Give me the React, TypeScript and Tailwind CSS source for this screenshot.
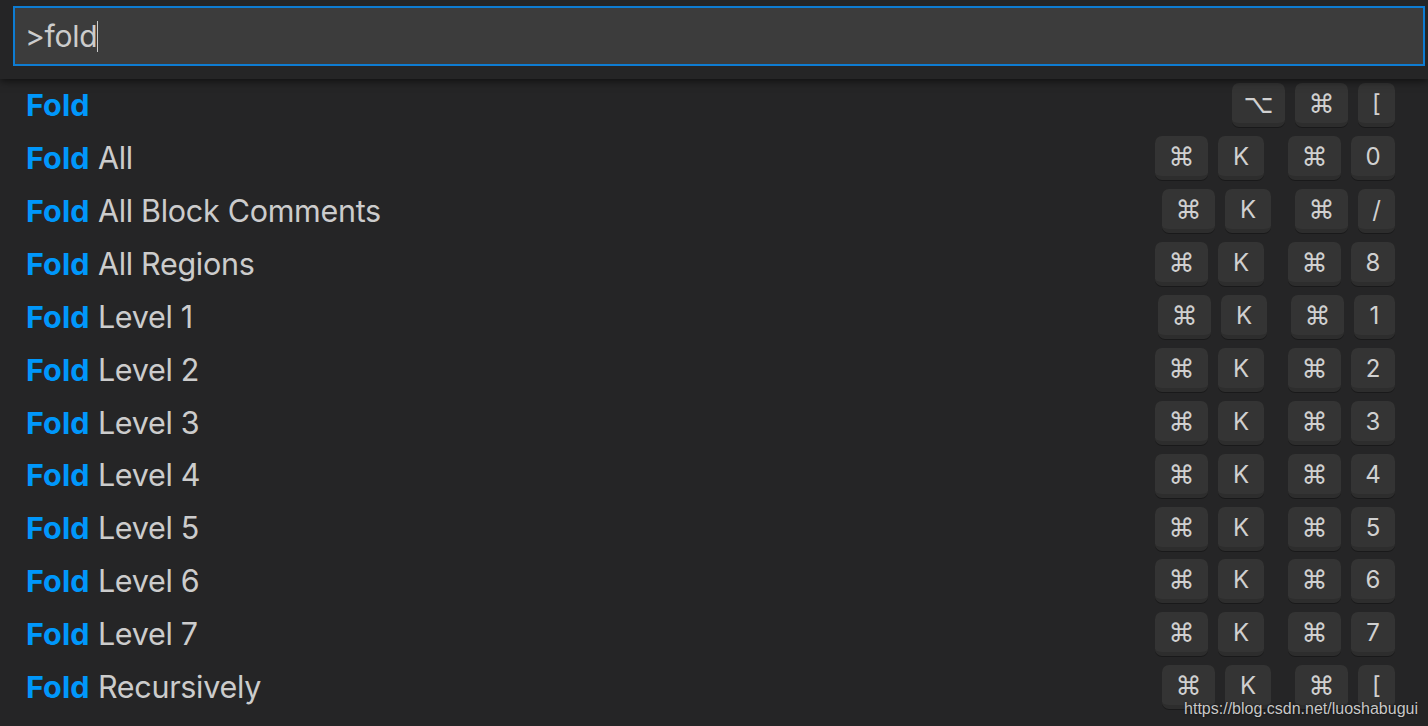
import React from "react";

type Row = { rest: string; keys: string[][] };

const rows: Row[] = [
  { rest: "", keys: [["⌥", "⌘", "["]] },
  { rest: "All", keys: [["⌘", "K"], ["⌘", "0"]] },
  { rest: "All Block Comments", keys: [["⌘", "K"], ["⌘", "/"]] },
  { rest: "All Regions", keys: [["⌘", "K"], ["⌘", "8"]] },
  { rest: "Level 1", keys: [["⌘", "K"], ["⌘", "1"]] },
  { rest: "Level 2", keys: [["⌘", "K"], ["⌘", "2"]] },
  { rest: "Level 3", keys: [["⌘", "K"], ["⌘", "3"]] },
  { rest: "Level 4", keys: [["⌘", "K"], ["⌘", "4"]] },
  { rest: "Level 5", keys: [["⌘", "K"], ["⌘", "5"]] },
  { rest: "Level 6", keys: [["⌘", "K"], ["⌘", "6"]] },
  { rest: "Level 7", keys: [["⌘", "K"], ["⌘", "7"]] },
  { rest: "Recursively", keys: [["⌘", "K"], ["⌘", "["]] },
];

function widthClass(k: string) {
  if (k === "⌘" || k === "⌥") return "w-[53px]";
  if (k === "K") return "w-[46px]";
  if (k === "/" || k === "[") return "w-[37px]";
  if (k === "1") return "w-[41px]";
  return "w-[44px]";
}

function Key({ k }: { k: string }) {
  const sym = k === "⌘" || k === "⌥";
  return (
    <div className={`${widthClass(k)} h-[44px] rounded-[7px] bg-[#343434] border-b-[4px] border-[#2d2d2d] shadow-[0_1px_0_rgba(0,0,0,0.3)] flex items-center justify-center text-[#d0d0d0] leading-none pt-[2px]`}>
      {sym ? (
        <span className="text-[26px]" style={{ fontFamily: '"DejaVu Sans", "Noto Sans", sans-serif' }}>
          {k}
        </span>
      ) : (
        <span className="text-[24px]" style={{ fontFamily: 'Inter, "Noto Sans", sans-serif' }}>
          {k}
        </span>
      )}
    </div>
  );
}

export default function App() {
  return (
    <div
      className="relative w-[1428px] h-[726px] overflow-hidden bg-[#252526] text-[#cccccc]"
      style={{ fontFamily: 'Inter, "Noto Sans", sans-serif' }}
    >
      <div className="relative z-10 h-[79px] bg-[#252526] pt-[6px] pl-[13px] pr-[3px] shadow-[0_2px_8px_rgba(0,0,0,0.6)]">
        <div className="h-[60px] border-2 border-[#0e7cd2] bg-[#3c3c3c] flex items-center pl-[10px]">
          <span className="text-[30px] text-[#cccccc] tracking-[-0.3px]">&gt;fold</span>
          <span className="w-[1px] h-[31px] bg-[#cccccc]" />
        </div>
      </div>
      <div className="flex flex-col">
        {rows.map((r, i) => (
          <div key={i} className="h-[52.9px] flex items-center pl-[26px] pr-[33px]">
            <div className="flex-1 text-[30.5px] leading-none whitespace-nowrap">
              <span className="font-bold text-[#0097fb] tracking-[0.1px]">Fold</span>
              {r.rest && <span className="text-[#cccccc] tracking-[-0.3px]"> {r.rest}</span>}
            </div>
            <div className="flex items-center gap-[24px]">
              {r.keys.map((chord, j) => (
                <div key={j} className="flex items-center gap-[10px]">
                  {chord.map((k, m) => (
                    <Key key={m} k={k} />
                  ))}
                </div>
              ))}
            </div>
          </div>
        ))}
      </div>
      <div
        className="absolute right-[10px] bottom-[9px] text-[16px] leading-none text-[#c8c8c8] [text-shadow:0_0_2px_rgba(0,0,0,0.8)]"
        style={{ fontFamily: '"Liberation Sans", Arial, sans-serif' }}
      >
        https://blog.csdn.net/luoshabugui
      </div>
    </div>
  );
}
